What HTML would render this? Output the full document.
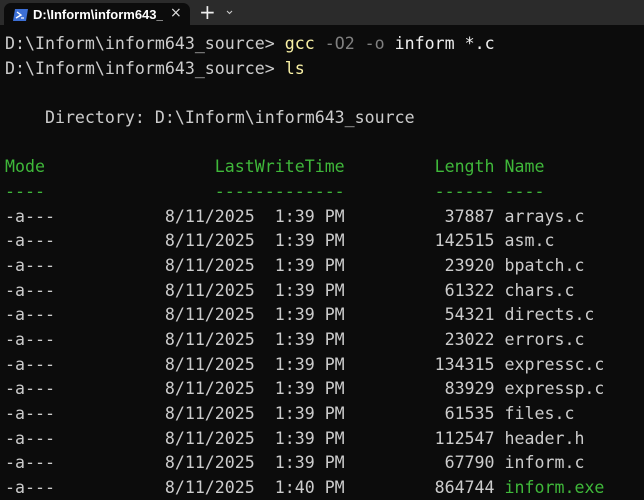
<!DOCTYPE html>
<html><head><style>
html,body{margin:0;padding:0;background:#0c0c0c;width:644px;height:500px;overflow:hidden}
.bar{position:absolute;left:0;top:0;width:644px;height:25px;background:#2b2b2b}
.tab{position:absolute;left:4px;top:3px;width:186px;height:23px;background:#0c0c0c;border-radius:7px 7px 0 0}
.tt{position:absolute;left:29px;top:4px;font:600 13px "Liberation Sans",sans-serif;color:#fff;white-space:nowrap;width:130px;overflow:hidden}
.ui{position:absolute;font-family:"DejaVu Sans",sans-serif;color:#ddd}
pre{position:absolute;left:5px;top:32px;margin:0;font:16.6px/24.65px "DejaVu Sans Mono",monospace;color:#cccccc}
.g{color:#3fb83a}.y{color:#f9f1a5}.d{color:#808080}.w{color:#eee}
</style></head><body>
<div class="bar"></div>
<div class="tab">
<svg style="position:absolute;left:9px;top:6px" width="15" height="12" viewBox="0 0 15 12"><path d="M2 0h13l-2 12H0z" fill="#3c6fd6"/><path d="M4 3l4 3-5 3" stroke="#fff" stroke-width="1.4" fill="none"/><path d="M8 9h3" stroke="#fff" stroke-width="1.2"/></svg>
<div class="tt">D:\Inform\inform643_source</div>
<div class="ui" style="left:166px;top:2px;font-size:14px">×</div>
</div>
<div class="ui" style="left:199px;top:0px;font-size:20px;color:#eee">+</div>
<svg style="position:absolute;left:226px;top:10px" width="7" height="5" viewBox="0 0 7 5"><path d="M1 1l2.5 2.5L6 1" stroke="#ccc" stroke-width="1.1" fill="none"/></svg>
<pre>D:\Inform\inform643_source&gt; <span class="y">gcc</span> <span class="d">-O2 -o</span> <span class="w">inform *.c</span>
D:\Inform\inform643_source&gt; <span class="y">ls</span>

    Directory: D:\Inform\inform643_source

<span class="g">Mode                 LastWriteTime         Length Name</span>
<span class="g">----                 -------------         ------ ----</span>
-a---           8/11/2025  1:39 PM          37887 arrays.c
-a---           8/11/2025  1:39 PM         142515 asm.c
-a---           8/11/2025  1:39 PM          23920 bpatch.c
-a---           8/11/2025  1:39 PM          61322 chars.c
-a---           8/11/2025  1:39 PM          54321 directs.c
-a---           8/11/2025  1:39 PM          23022 errors.c
-a---           8/11/2025  1:39 PM         134315 expressc.c
-a---           8/11/2025  1:39 PM          83929 expressp.c
-a---           8/11/2025  1:39 PM          61535 files.c
-a---           8/11/2025  1:39 PM         112547 header.h
-a---           8/11/2025  1:39 PM          67790 inform.c
-a---           8/11/2025  1:40 PM         864744 <span class="g">inform.exe</span></pre>
</body></html>
